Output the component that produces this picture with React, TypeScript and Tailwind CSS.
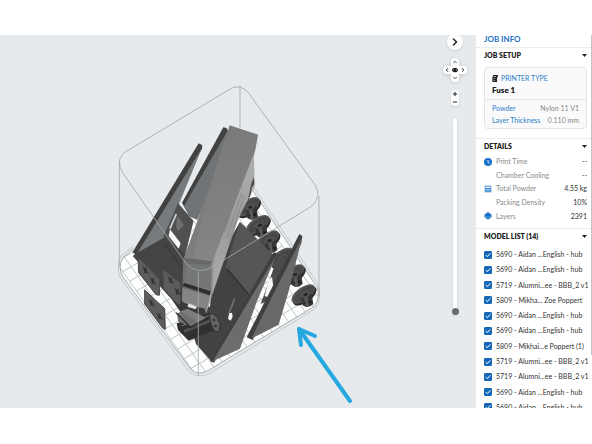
import React from "react";
import {
  ChevronDown,
  ChevronLeft,
  ChevronRight,
  ChevronUp,
  Eye,
  Minus,
  Plus,
} from "lucide-react";

const details = [
  { label: "Print Time", value: "--", icon: "clock" },
  { label: "Chamber Cooling", value: "--", icon: "" },
  { label: "Total Powder", value: "4.55 kg", icon: "powder" },
  { label: "Packing Density", value: "10%", icon: "" },
  { label: "Layers", value: "2391", icon: "layers" },
];

const models = [
  "5690 - Aidan ...English - hub",
  "5690 - Aidan ...English - hub",
  "5719 - Alumni...ee - BBB_2 v1",
  "5809 - Mikha... Zoe Poppert",
  "5690 - Aidan ...English - hub",
  "5690 - Aidan ...English - hub",
  "5809 - Mikhai...e Poppert (1)",
  "5719 - Alumni...ee - BBB_2 v1",
  "5719 - Alumni...ee - BBB_2 v1",
  "5690 - Aidan ...English - hub",
  "5690 - Aidan ...English - hub",
];

// Corners of the build plate before rounding
const near = [264, 774];
const left = [18, 426];
const right = [640, 552];

const plateLines = () => {
  const lines: number[][] = [];
  const u = [right[0] - near[0], right[1] - near[1]];
  const v = [left[0] - near[0], left[1] - near[1]];
  for (let i = 0; i <= 15; i++) {
    const t = i / 15;
    const x = near[0] + u[0] * t;
    const y = near[1] + u[1] * t;
    lines.push([x, y, x + v[0] * 1.6, y + v[1] * 1.6]);
  }
  for (let i = 0; i <= 20; i++) {
    const t = i / 12;
    const x = near[0] + v[0] * t;
    const y = near[1] + v[1] * t;
    lines.push([x, y, x + u[0], y + u[1]]);
  }
  return lines;
};

const hubs = [
  [414, 260],
  [443, 314],
  [472, 360],
  [515, 412],
  [548, 462],
];

function Hub({ x, y }: { x: number; y: number }) {
  return (
    <g transform={`translate(${x} ${y})`}>
      <ellipse cx="0" cy="7" rx="41" ry="20" transform="rotate(-36)" fill="#2b2b2b" />
      <ellipse cx="0" cy="0" rx="41" ry="20" transform="rotate(-36)" fill="#555" />
      <ellipse cx="2" cy="1" rx="34" ry="15" transform="rotate(-36)" fill="#484848" />
      <path d="M-8 4 L-2 34 Q14 46 30 30 L25 0 Q6 -12 -8 4Z" fill="#363636" />
      <path d="M2 8 L7 38 Q12 40 17 38 L13 6Z" fill="#585858" />
      <ellipse cx="5" cy="3" rx="17" ry="9" transform="rotate(-20)" fill="#505050" />
      <ellipse cx="6" cy="4" rx="7" ry="4" transform="rotate(-20)" fill="#242424" />
      <circle cx="20" cy="24" r="4" fill="#191919" />
      <circle cx="5" cy="27" r="2.5" fill="#202020" />
    </g>
  );
}

function Bracket({ points, holes }: { points: string; holes: number[][] }) {
  return (
    <g>
      <polygon points={points} fill="#5c5c5c" stroke="#444" strokeWidth="3" />
      {holes.map(([x, y]) => (
        <path
          key={`${x}-${y}`}
          d={`M${x - 8} ${y - 10} l7 6 6 -2 1 10 8 10 -9 -4 -6 2 -1 -10Z`}
          fill="#353535"
        />
      ))}
    </g>
  );
}

function BuildVolume() {
  return (
    <svg
      viewBox="0 35 476 373"
      preserveAspectRatio="xMidYMid meet"
      className="block h-full w-full"
      role="img"
      aria-label="Build chamber with packed models"
    >
      <defs>
        <clipPath id="plate">
          <path d="M38 470 Q22 440 40 412 L72 385 L390 180 Q410 185 424 205 L620 500 Q634 530 612 560 L294 752 Q264 768 242 748Z" />
        </clipPath>
        <linearGradient id="fin" x1="0" y1="0" x2="1" y2="1">
          <stop offset="0" stopColor="#6a6a6a" />
          <stop offset="0.6" stopColor="#777c7e" />
          <stop offset="1" stopColor="#626262" />
        </linearGradient>
        <linearGradient id="side" x1="0" y1="0" x2="0" y2="1">
          <stop offset="0" stopColor="#b4b6b7" />
          <stop offset="0.5" stopColor="#9b9c9c" />
          <stop offset="1" stopColor="#b0b2b2" />
        </linearGradient>
        <linearGradient id="top" x1="0" y1="0" x2="0" y2="1">
          <stop offset="0" stopColor="#7a7a7a" />
          <stop offset="1" stopColor="#858585" />
        </linearGradient>
      </defs>

      <g transform="translate(110 120) scale(0.3333)">
        {/* plate */}
        <g clipPath="url(#plate)">
          <rect x="0" y="150" width="660" height="640" fill="#fdfefe" />
          {plateLines().map(([x1, y1, x2, y2], i) => (
            <line key={i} x1={x1} y1={y1} x2={x2} y2={y2} stroke="#b4b8ba" strokeWidth="2.5" />
          ))}
        </g>
        <path
          d="M38 470 Q22 440 40 412 L72 385 M424 205 L620 500 Q634 530 612 560 L294 752 Q264 768 242 748 L38 470"
          fill="none"
          stroke="#9b9fa2"
          strokeWidth="2.5"
        />
        <path
          d="M30 472 Q18 435 34 406 L72 378 M430 200 L624 492 Q638 536 616 566 L296 762 Q262 776 236 754 L30 472"
          fill="none"
          stroke="#b3b7ba"
          strokeWidth="2"
        />

        {hubs.map(([x, y]) => (
          <Hub key={x} x={x} y={y} />
        ))}

        {/* rear left fins */}
        <polygon points="216,248 340,22 350,24 354,34 350,60 240,290" fill="#414141" />
        <polygon points="352,34 352,60 330,140 262,300 236,288 222,258" fill="#707476" />
        <polygon points="68,396 266,70 277,76 276,86 82,408" fill="#414141" />
        <polygon points="276,84 208,250 198,268 168,356 80,402" fill="url(#fin)" />

        {/* left base */}
        <polygon points="204,250 250,304 222,420 218,550 178,530 68,408 82,398 164,352" fill="#444" />
        <polygon points="204,250 250,304 226,400 160,350" fill="#505050" />
        <polygon points="180,328 212,370 206,386 176,348" fill="#f7f9fa" />
        <path d="M199 282 L180 326" stroke="#d5dadd" strokeWidth="5" />
        <polygon points="202,288 222,316 204,334 198,318" fill="#6f6f6f" />
        <path d="M164 370 L222 450" stroke="#333" strokeWidth="3" />

        {/* right base */}
        <polygon points="390,306 490,410 400,590 304,724 258,672 230,560 300,560 312,440" fill="#424242" />
        <polygon points="390,306 490,404 420,530 346,444" fill="#565656" />
        <path d="M350 446 L418 526" stroke="#333" strokeWidth="5" />
        <path d="M374 536 L356 582" stroke="#717171" strokeWidth="5" />
        <path d="M358 580 l8 -2 2 12 -6 12 -8 -6Z" fill="#f4f6f7" />

        {/* lower core */}
        <polygon points="220,414 312,418 304,530 290,580 216,548" fill="#6f6f6f" />
        <polygon points="230,418 308,428 302,518 222,488" fill="#747677" />
        <polygon points="222,488 302,514 300,526 218,498" fill="#2d2d2d" />
        <polygon points="218,504 298,528 288,576 216,546" fill="#858585" />
        <polygon points="212,546 284,566 290,588 214,566" fill="#3b3b3b" />
        <polygon points="236,550 262,560 256,568 232,560" fill="#dfe2e3" />

        {/* tall block */}
        <polygon points="443,44 432,110 434,200 398,270 384,300 302,538 286,584 304,510 306,420" fill="url(#side)" />
        <polygon points="432,172 433,192 426,202 421,228 414,240 424,190" fill="#4c4c4c" />
        <polygon points="359,16 444,44 436,90 306,428 222,414 300,200" fill="url(#top)" />
        <polygon points="359,16 300,200 222,414 248,418 320,130" fill="#7d7d7d" />
        <polygon points="222,414 308,424 300,434 236,432" fill="#686868" />
        <g stroke="#858686" strokeWidth="2.5" fill="none">
          <path d="M394 222 L350 354" />
          <path d="M402 226 L356 370" />
          <path d="M362 282 L344 338" />
          <path d="M312 400 L304 530" />
        </g>

        {/* front clamp */}
        <polygon points="152,478 214,540 240,570 214,580 156,496" fill="#3a3a3a" />
        <Bracket points="158,446 212,490 212,548 206,556 160,506" holes={[[180, 478], [200, 512]]} />
        <Bracket points="84,410 142,470 150,480 148,526 138,524 86,458" holes={[[104, 448], [126, 480]]} />
        <Bracket points="104,510 164,566 166,628 158,624 104,552" holes={[[122, 546], [146, 586]]} />
        <polygon points="200,610 300,578 330,612 326,636 304,634 236,662 204,630" fill="#303030" />
        <path d="M222 634 L316 596" stroke="#515151" strokeWidth="9" />
        <path d="M214 618 L310 582" stroke="#787878" strokeWidth="3" />
        <polygon points="202,580 232,566 288,594 242,620 204,604" fill="#707070" />
        <polygon points="232,566 288,594 262,606 212,574" fill="#7d7d7d" />
        <path d="M198 578 L242 622 L296 592" stroke="#2c2c2c" strokeWidth="4" fill="none" />
        <path
          d="M298 582 Q316 574 330 612 Q332 640 316 634 Q300 620 298 582Z"
          fill="#626262"
          stroke="#333"
          strokeWidth="3"
        />
        <circle cx="312" cy="600" r="4" fill="#333" />
        <circle cx="317" cy="618" r="4" fill="#333" />

        {/* front right fins */}
        <polygon points="300,724 490,398 500,398 500,412 312,728" fill="#3f3f3f" />
        <polygon points="500,404 440,546 390,686 308,724" fill="#6c6c6c" />
        <polygon points="500,420 538,404 506,490 478,540 452,552" fill="#4b4b4b" />
        <polygon points="486,470 490,498 474,532 464,528 476,480" fill="#f4f6f7" />
        <polygon points="410,652 568,342 577,348 574,370 428,660" fill="#3f3f3f" />
        <polygon points="577,350 536,514 506,614 424,656 466,570" fill="#686868" />

        <Hub x={580} y={522} />

        {/* chamber outline */}
        <g fill="none" stroke="#a4a8ab" strokeWidth="2.5">
          <path d="M28 440 L28 126 Q30 104 52 92 L362 -94 Q386 -108 412 -86 L616 196 Q636 230 606 258 L316 436 Q262 472 226 428 L38 158 Q28 142 28 126" />
          <path d="M390 -104 L390 24" />
          <path d="M627 228 L627 530" />
          <path d="M265 456 L265 766" />
        </g>
      </g>

      {/* pointer arrow */}
      <g stroke="#25a9e0" strokeWidth="4" strokeLinecap="round" strokeLinejoin="round" fill="none">
        <path d="M350 401 L299 329" />
        <path d="M301 345 L299 329 L315 336" />
      </g>
    </svg>
  );
}

function ViewControls() {
  return (
    <div className="absolute right-[9px] top-0 flex w-6 flex-col items-center text-[#222]">
      <button
        aria-label="Collapse panel"
        className="-mt-px flex size-4 items-center justify-center rounded-full bg-white shadow"
      >
        <ChevronRight className="size-3" strokeWidth={3} />
      </button>
      <div className="mt-2 grid grid-cols-3 drop-shadow-sm">
        <button aria-label="Tilt up" className="col-start-2 flex size-2 items-center justify-center rounded-t-sm bg-white">
          <ChevronUp className="size-1.5" strokeWidth={3} />
        </button>
        <button aria-label="Rotate left" className="col-start-1 flex size-2 items-center justify-center rounded-l-sm bg-white">
          <ChevronLeft className="size-1.5" strokeWidth={4} />
        </button>
        <button aria-label="Reset view" className="flex size-2 items-center justify-center bg-white">
          <Eye className="size-1.5" strokeWidth={5} />
        </button>
        <button aria-label="Rotate right" className="flex size-2 items-center justify-center rounded-r-sm bg-white">
          <ChevronRight className="size-1.5" strokeWidth={4} />
        </button>
        <button aria-label="Tilt down" className="col-start-2 flex size-2 items-center justify-center rounded-b-sm bg-white">
          <ChevronDown className="size-1.5" strokeWidth={3} />
        </button>
      </div>
      <div className="mt-2 flex flex-col rounded-sm bg-white shadow-sm">
        <button aria-label="Zoom in" className="flex size-2 items-center justify-center">
          <Plus className="size-1.5" strokeWidth={4} />
        </button>
        <button aria-label="Zoom out" className="flex size-2 items-center justify-center">
          <Minus className="size-1.5" strokeWidth={4} />
        </button>
      </div>
      <input
        type="range"
        aria-label="Layer"
        min={0}
        max={2391}
        defaultValue={0}
        className="mt-3 h-[197px] w-1 appearance-none rounded-full bg-white shadow-sm [direction:rtl] [writing-mode:vertical-lr] [&::-webkit-slider-thumb]:size-[7px] [&::-webkit-slider-thumb]:appearance-none [&::-webkit-slider-thumb]:rounded-full [&::-webkit-slider-thumb]:bg-[#6b6b6b]"
      />
    </div>
  );
}

function Caret() {
  return (
    <svg viewBox="0 0 10 6" className="h-[3px] w-[5px]" aria-hidden="true">
      <path d="M0 0h10L5 6z" fill="#222" />
    </svg>
  );
}

function SectionTitle({ children }: { children: React.ReactNode }) {
  return (
    <button className="flex h-3.5 w-full items-center justify-between pl-2 pr-[5px] font-extrabold text-[#1c1c1c]">
      <span>{children}</span>
      <Caret />
    </button>
  );
}

function DetailIcon({ name }: { name: string }) {
  if (name === "clock") {
    return (
      <svg viewBox="0 0 24 24" className="size-2" aria-hidden="true">
        <circle cx="12" cy="12" r="12" fill="#1a73cb" />
        <path d="M12 6v7l5 3" fill="none" stroke="#fff" strokeWidth="2.5" />
      </svg>
    );
  }
  if (name === "powder") {
    return (
      <svg viewBox="0 0 24 24" className="size-2" aria-hidden="true">
        <path d="M2 2h20v20H2z" fill="#4a8fd6" />
        <path d="M4 5h16v4H4z" fill="#e3eefa" />
        <path d="M5 13h14M5 17h14" stroke="#a9cbee" strokeWidth="2" />
      </svg>
    );
  }
  if (name === "layers") {
    return (
      <svg viewBox="0 0 24 24" className="size-2" aria-hidden="true">
        <path d="M12 0 24 9 12 18 0 9z" fill="#1a73cb" />
        <path d="M0 14l12 9 12-9-3-2-9 7-9-7z" fill="#1a73cb" />
      </svg>
    );
  }
  return <span />;
}

function PrinterIcon() {
  return (
    <svg viewBox="0 0 20 24" className="h-[7px] w-[6px]" aria-hidden="true">
      <path d="M3 0h17v8h-3v16H1V6h2z" fill="#222" />
      <path d="M5 3h9v3H5zM4 12h7v2H4zM4 17h7v2H4z" fill="#cfcfcf" />
    </svg>
  );
}

function JobPanel() {
  return (
    <aside className="relative w-[116px] shrink-0 overflow-hidden bg-white text-[#333]">
      <h1 className="flex h-3 items-center pb-[5px] pl-2 text-[8px] font-bold leading-none text-[#1a6fc4]">
        JOB INFO
      </h1>
      <section className="border-t border-[#ececec]">
        <SectionTitle>JOB SETUP</SectionTitle>
        <div className="ml-2 mr-[5px] mt-[5px] rounded-sm border border-[#e2e4e6] bg-[#fafafa]">
          <div className="border-b border-[#e2e4e6] px-[7px] pb-[3px] pt-1">
            <h2 className="flex h-3 items-center gap-[3px] text-[#2d7cc9]">
              <PrinterIcon />
              PRINTER TYPE
            </h2>
            <p className="flex h-3 items-center text-[8px] font-extrabold text-[#1c1c1c]">Fuse 1</p>
          </div>
          <dl className="px-[7px] py-[2px]">
            <div className="flex h-3 items-center justify-between">
              <dt className="text-[#2d7cc9]">Powder</dt>
              <dd className="text-[#888]">Nylon 11 V1</dd>
            </div>
            <div className="flex h-3 items-center justify-between">
              <dt className="text-[#2d7cc9]">Layer Thickness</dt>
              <dd className="text-[#888]">0.110 mm</dd>
            </div>
          </dl>
        </div>
      </section>
      <section className="mt-[9px] border-t border-[#ececec]">
        <SectionTitle>DETAILS</SectionTitle>
        <dl className="mt-[2px] grid h-[68px] grid-rows-5 pl-2 pr-[5px]">
          {details.map((d) => (
            <div key={d.label} className="grid grid-cols-[8px_1fr_auto] items-center gap-1">
              <DetailIcon name={d.icon} />
              <dt className="text-[#8a8a8a]">{d.label}</dt>
              <dd>{d.value}</dd>
            </div>
          ))}
        </dl>
      </section>
      <section className="mt-[5px] border-t border-[#ececec]">
        <SectionTitle>MODEL LIST (14)</SectionTitle>
        <ul className="mt-1 grid h-[168px] grid-rows-11 pl-2">
          {models.map((name, i) => (
            <li key={i} className="flex items-center">
              <label className="flex items-center gap-1 whitespace-nowrap">
                <span className="grid size-2 place-items-center">
                  <input
                    type="checkbox"
                    defaultChecked
                    className="peer col-start-1 row-start-1 size-2 appearance-none rounded-[1px] border border-[#1668b8] checked:bg-[#1668b8]"
                  />
                  <svg
                    viewBox="0 0 12 12"
                    className="pointer-events-none invisible col-start-1 row-start-1 size-2 peer-checked:visible"
                    aria-hidden="true"
                  >
                    <path d="M3 6l2 2.5L9.5 3.5" fill="none" stroke="#fff" strokeWidth="1.5" />
                  </svg>
                </span>
                {name}
              </label>
            </li>
          ))}
        </ul>
      </section>
      <div className="absolute right-0 top-0 h-[320px] w-px bg-[#c4c4c4]" />
    </aside>
  );
}

export default function App() {
  return (
    <div className="flex h-screen flex-col bg-white pb-9 pt-[35px] font-[Lato,sans-serif] text-[7px] leading-none">
      <div className="flex min-h-0 flex-1">
        <main className="relative min-w-0 flex-1 bg-[#e6eaed]">
          <BuildVolume />
          <ViewControls />
        </main>
        <JobPanel />
      </div>
    </div>
  );
}
